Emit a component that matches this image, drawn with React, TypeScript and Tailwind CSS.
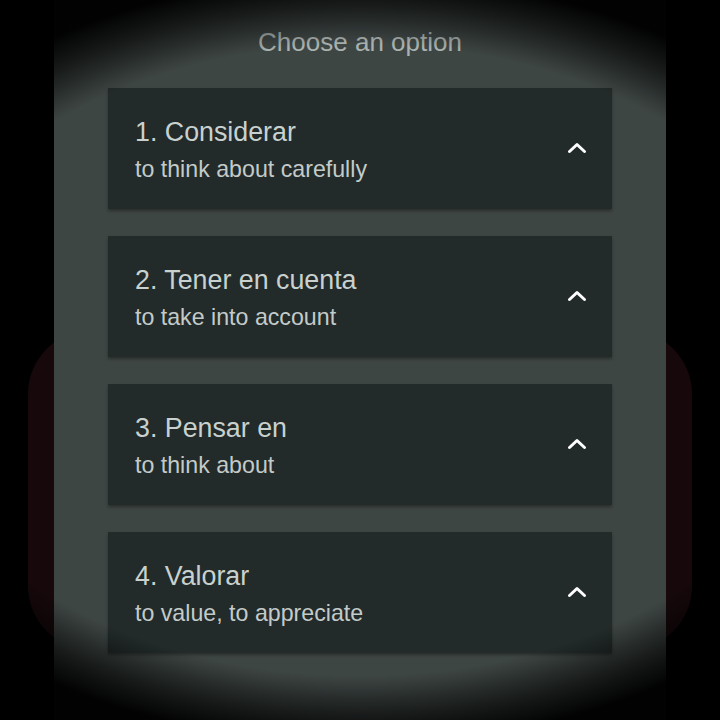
import React from "react";

const options = [
  { title: "1. Considerar", meaning: "to think about carefully" },
  { title: "2. Tener en cuenta", meaning: "to take into account" },
  { title: "3. Pensar en", meaning: "to think about" },
  { title: "4. Valorar", meaning: "to value, to appreciate" },
];

const Chevron = () => (
  <svg width="22" height="14" viewBox="0 0 22 14" fill="none">
    <path d="M3.5 10.5 L11 3.5 L18.5 10.5" stroke="#ffffff" strokeWidth="3" strokeLinecap="round" strokeLinejoin="round" />
  </svg>
);

const OptionCard = ({ title, meaning }: { title: string; meaning: string }) => (
  <div className="w-[504px] h-[121px] bg-[#222a2a] flex items-center justify-between pl-[27px] pr-[24px] shadow-[0_2px_3px_rgba(0,0,0,0.35)]">
    <div className="flex flex-col gap-[6px] mt-[3px]">
      <div className="text-[26.8px] leading-[32px] text-[#c9d1cf]">{title}</div>
      <div className="text-[23.2px] leading-[30px] text-[#c3cbc9]">{meaning}</div>
    </div>
    <div className="-mt-[2px]">
      <Chevron />
    </div>
  </div>
);

export default function App() {
  return (
    <div
      className="relative w-[720px] h-[720px] overflow-hidden bg-black"
      style={{ fontFamily: '"Liberation Sans", Arial, sans-serif' }}
    >
      <div className="absolute left-[28px] right-[28px] top-[330px] h-[320px] rounded-[64px] bg-[#16080b]" />
      <div className="relative mx-auto w-[612px] h-full bg-[#3e4644] flex flex-col items-center">
        <div className="pt-[26px] text-[26px] leading-[32px] text-[#aab2b0]">Choose an option</div>
        <div className="mt-[30px] flex flex-col gap-[27px]">
          {options.map((o) => (
            <OptionCard key={o.title} title={o.title} meaning={o.meaning} />
          ))}
        </div>
      </div>
      <div className="pointer-events-none absolute inset-0 bg-[radial-gradient(ellipse_560px_380px_at_50%_50%,transparent_83%,rgba(0,0,0,0.6)_93%,rgba(0,0,0,0.97)_101%)]" />
    </div>
  );
}
